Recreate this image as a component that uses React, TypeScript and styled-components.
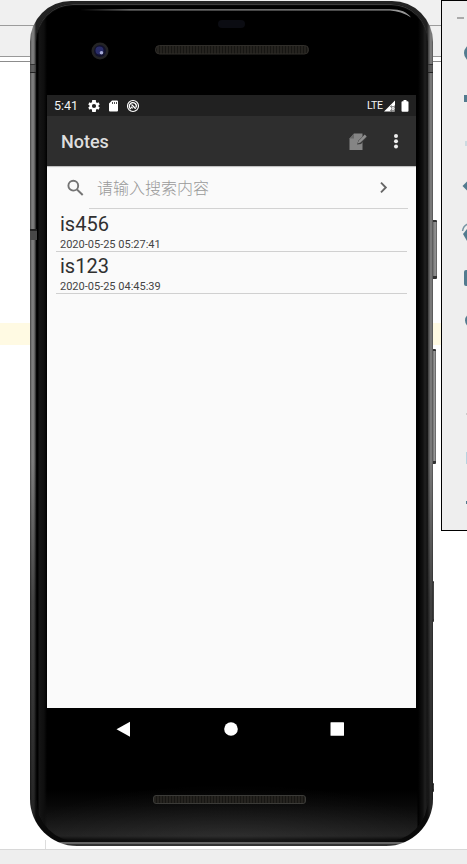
import React from "react";
import styled, { createGlobalStyle } from "styled-components";

const GlobalStyle = createGlobalStyle`
  * { box-sizing: border-box; }
  body { margin: 0; background: #fff; }
`;

const Desktop = styled.main`
  position: relative;
  width: 467px;
  height: 864px;
  overflow: hidden;
  background: #fff;
  font-family: Roboto, "Noto Sans CJK SC", sans-serif;
`;

const Editor = styled.div`
  height: 864px;
  display: flex;
  flex-direction: column;
`;

const MenuStrip = styled.div`
  height: 26px;
  background: #f0f0f0;
  border-bottom: 1px solid #9c9c9c;
`;

const TabStrip = styled.div`
  height: 31px;
  background: #f0f0f0;
  border-bottom: 1px solid #999;
`;

const SubStrip = styled.div`
  height: 5px;
  border-bottom: 1px solid #8c8c8c;
`;

const CodeArea = styled.div`
  flex: 1;
  padding-top: 261px;
`;

const CurrentLine = styled.div`
  height: 22px;
  background: #fffae3;
`;

const Gutter = styled.div`
  height: 9px;
  margin-left: 45px;
  border-left: 1px solid #ddd;
`;

const BottomStrip = styled.div`
  height: 15px;
  background: #eee;
  border-top: 1px solid #d8d8d8;
`;

const Phone = styled.section`
  position: absolute;
  left: 30px;
  top: 1px;
  width: 403px;
  height: 845px;
  border-radius: 41px 41px 47px 47px;
  padding: 3px 5px 4px 6px;
  background:
    linear-gradient(to bottom, transparent 0 63px, #333 63px 64px, #4448 64px 71px, #222 71px 72px, transparent 72px),
    linear-gradient(to bottom, transparent 841px, #666 841px 843px, #333 843px),
    linear-gradient(to bottom, #0000 0, #0000 460px, #0007 600px, #000a 780px, #000b 838px),
    linear-gradient(to right, #444 0, #808080 2px, #777 4px, #222 6px, #222 397px, #555 399px, #858585 401px, #505050 403px);
`;

const Face = styled.div`
  height: 838px;
  border-radius: 37px 37px 43px 43px;
  overflow: hidden;
  padding: 0 12px 0 11px;
  background:
    radial-gradient(ellipse 220px 58px at 50% 100%, #fff1, #fff0) no-repeat,
    linear-gradient(to right, #000 0 2px, #151515 3px, #0e0e0e 8px, transparent 11px, transparent 381px, #000 382px, #111 387px, #202020 389px, #101010 392px),
    linear-gradient(to bottom, #000 0, #000 785px, #070707 800px, #202020 832px, #080808 836px, #050505 838px);
  box-shadow: inset 0 1px 1px #444;
`;

const Forehead = styled.div`
  height: 91px;
`;

const ForeheadArt = styled.svg`
  display: block;
  width: 369px;
  height: 91px;
  overflow: visible;
`;

const Screen = styled.div`
  width: 369px;
  height: 613px;
  display: flex;
  flex-direction: column;
  background: #fafafa;
`;

const StatusBar = styled.header`
  height: 21px;
  padding: 0 7px;
  display: flex;
  align-items: center;
  background: #212121;
  color: #f4f4f4;
`;

const Clock = styled.span`
  width: 34px;
  font-size: 12.5px;
  line-height: 21px;
`;

const StatusIcon = styled.svg<{ $w: number; $gap?: number }>`
  width: ${(p) => p.$w}px;
  height: 14px;
  margin-right: ${(p) => p.$gap ?? 0}px;
  flex: none;
`;

const Network = styled.span`
  margin-left: auto;
  width: 17px;
  font-size: 10.5px;
  letter-spacing: -0.3px;
  line-height: 21px;
`;

const AppBar = styled.div`
  height: 50px;
  padding: 2px 14px 0;
  display: flex;
  align-items: center;
  background: #2e2e2e;
  color: #dedede;
`;

const Title = styled.h1`
  margin: 0 auto 0 0;
  font-size: 18px;
  font-weight: 500;
  line-height: 24px;
`;

const BarIcon = styled.svg<{ $w: number; $gap?: number }>`
  width: ${(p) => p.$w}px;
  height: 20px;
  margin-right: ${(p) => p.$gap ?? 0}px;
`;

const SearchRow = styled.div`
  height: 43px;
  padding: 0 8px 0 19px;
  display: flex;
  box-shadow: inset 0 2px 1px -1px #bbb;
`;

const SearchIcon = styled.svg`
  width: 18px;
  height: 43px;
  margin-right: 5px;
`;

const SearchField = styled.div`
  flex: 1;
  display: flex;
  padding: 0 13px 0 8px;
  border-bottom: 1px solid #d2d2d2;
  color: #999;
  font-family: "Noto Sans CJK SC", sans-serif;
  font-size: 16px;
  font-weight: 300;
  line-height: 42px;
`;

const Arrow = styled.svg`
  width: 20px;
  height: 43px;
  margin-left: auto;
`;

const NoteList = styled.div`
  padding: 0 9px;
`;

const Note = styled.article<{ $h: number }>`
  height: ${(p) => p.$h}px;
  padding: ${(p) => p.$h - 39}px 4px 0;
  border-bottom: 1px solid #d0d0d0;
  color: #303030;
`;

const NoteTitle = styled.div`
  font-size: 20px;
  line-height: 23px;
`;

const NoteDate = styled.div`
  font-size: 11px;
  line-height: 15px;
  padding-top: 1px;
  color: #444;
`;

const Navigation = styled.svg`
  display: block;
  width: 369px;
  height: 134px;
`;

const SideKey = styled.div<{ $y: number; $h: number; $w: number; $dark?: boolean }>`
  position: absolute;
  left: 432px;
  top: ${(p) => p.$y}px;
  width: ${(p) => p.$w}px;
  height: ${(p) => p.$h}px;
  border-radius: 0 1px 1px 0;
  border-top: 2px solid #333;
  border-bottom: 3px solid #333;
  background: ${(p) => (p.$dark ? "#444" : "linear-gradient(to right, #555, #999 65%, #555)")};
`;

const AntennaBand = styled.div`
  position: absolute;
  left: 30px;
  top: 229px;
  width: 7px;
  height: 11px;
  background: #484848;
  border-top: 2px solid #222;
`;

const EmulatorTools = styled.aside`
  position: absolute;
  left: 441px;
  top: 0;
  width: 30px;
  height: 531px;
  display: flex;
  flex-direction: column;
  background: #eee;
  border: 1px solid #000;
`;

const MinimizeRow = styled.div`
  height: 30px;
  padding: 16px 0 0 15px;
`;

const MinimizeMark = styled.div`
  width: 7px;
  height: 2px;
  background: #aaa;
`;

const ToolIcon = styled.svg`
  width: 46px;
  height: 45px;
  flex: none;
  fill: #527b8f;
`;

const tools: React.ReactNode[] = [
  <circle key="power" cx="31" cy="22" r="9" />,
  <path key="volume-up" d="M22 19h8v7h-8z" />,
  <path key="volume-down" d="M23 20h8v5h-8z" fill="#cddbe1" />,
  <path key="rotate-left" d="m20.500 20 6-6v12z" />,
  <g key="rotate-right">
    <path d="M20.500 20C21 17 23 14 26 13" fill="none" stroke="#7895a3" strokeWidth="1.500" />
    <path d="m21 23 4-5v12z" />
  </g>,
  <rect key="camera" x="22" y="14" width="20" height="16" rx="2" />,
  <circle key="zoom" cx="30" cy="19.500" r="7" />,
  null,
  <path key="back" d="M24 22h3v2h-3z" fill="#ccc" />,
];

export default function App() {
  return (
    <Desktop>
      <GlobalStyle />
      <Editor>
        <MenuStrip />
        <TabStrip />
        <SubStrip />
        <CodeArea><CurrentLine /></CodeArea>
        <Gutter />
        <BottomStrip />
      </Editor>

      <SideKey $y={220} $h={59} $w={5} />
      <SideKey $y={349} $h={115} $w={4} />
      <SideKey $y={581} $h={41} $w={2} $dark />
      <SideKey $y={783} $h={9} $w={2} $dark />

      <Phone>
        <Face>
          <Forehead>
            <ForeheadArt viewBox="47 4 369 91">
              <defs>
                <pattern id="mesh" width="3" height="3" patternUnits="userSpaceOnUse">
                  <rect width="3" height="3" fill="#25231f" />
                  <rect width="1" height="3" fill="#171613" />
                </pattern>
                <linearGradient id="shine">
                  <stop offset="0" stopColor="#777" stopOpacity="0" />
                  <stop offset=".15" stopColor="#858585" />
                  <stop offset="1" stopColor="#999" />
                </linearGradient>
              </defs>
              <path d="M80 9.300H390C401 9.500 407 12 411 17.500Q401 11 390 10.500H80z" fill="url(#shine)" />
              <rect x="218" y="20" width="27" height="8" rx="4" fill="#0b0c12" />
              <rect x="155.500" y="45.500" width="153" height="8.500" rx="4" fill="url(#mesh)" stroke="#302e2a" />
              <circle cx="100" cy="51" r="8.500" fill="#242425" />
              <circle cx="100" cy="51" r="6" fill="#12122c" />
              <circle cx="99.500" cy="50.500" r="4" fill="#292c68" />
              <circle cx="101.500" cy="52.800" r="1.800" fill="#a8acd8" />
            </ForeheadArt>
          </Forehead>

          <Screen>
            <StatusBar>
              <Clock>5:41</Clock>
              <StatusIcon $w={12} $gap={9} viewBox="2 2 20 20" fill="#fff">
                <path d="M19.430 12.980a8 8 0 0 0 0-1.960l2.110-1.650-2-3.460-2.490 1a7.300 7.300 0 0 0-1.690-.98L15 2H9l-.38 3.930c-.61.250-1.170.590-1.690.980l-2.490-1-2 3.460 2.110 1.650a8 8 0 0 0 0 1.960l-2.110 1.650 2 3.460 2.490-1c.52.400 1.080.730 1.690.980L9 22h6l.38-3.930c.61-.25 1.170-.59 1.690-.98l2.490 1 2-3.460zM12 15.500a3.500 3.500 0 1 1 0-7 3.500 3.500 0 0 1 0 7z" />
              </StatusIcon>
              <StatusIcon $w={9} $gap={8} viewBox="0 0 9 14" fill="#fff">
                <path fillRule="evenodd" d="M3 1.500h5q1 0 1 1v9q0 1-1 1H1q-1 0-1-1v-7zM3 3v2h.8V3zm2 0v2h.8V3zm2 0v2h.8V3z" />
              </StatusIcon>
              <StatusIcon $w={14} viewBox="0 0 14 14" fill="none" stroke="#fff">
                <circle cx="7" cy="7" r="5.500" strokeWidth="1.200" />
                <path d="M5 10A3.300 3.300 0 0 1 4.300 4.800C5.500 3.500 7.800 3.400 9.200 4.600 10.300 5.600 10.600 7.200 9.900 8.500M5.500 5.500l4.200 4.200M5 7.700l1.700 1.700" strokeWidth="1.300" />
              </StatusIcon>
              <Network>LTE</Network>
              <StatusIcon $w={12} $gap={5} viewBox="0 0 12 14">
                <path d="M11 1.500v11H0z" fill="#fff" />
                <path d="m7 7 4 5m0-5-4 5" stroke="#212121" strokeWidth="2" />
                <path d="m7.500 7.500 3 4m0-4-3 4" stroke="#fff" strokeWidth="1.100" />
              </StatusIcon>
              <StatusIcon $w={8} viewBox="0 0 8 14" fill="#fff">
                <path d="M2.500 1h3v1.200h1q1 0 1 1v8.500q0 1-1 1h-5q-1 0-1-1V3.200q0-1 1-1h1z" />
              </StatusIcon>
            </StatusBar>

            <AppBar>
              <Title>Notes</Title>
              <BarIcon $w={20} $gap={25} viewBox="0 0 20 20">
                <path d="M1.500 6.500 6 1.500h8.500V18h-13z" fill="#858585" />
                <path d="m1.500 6.500 4.500-5v5z" fill="#686868" />
                <path d="m9 12.500 1.500-4L16 3l3 2.500-6 6.500z" fill="#3a3a3a" />
                <path d="m9.500 11.500 1.300-2.800 6-6.200 1.900 1.900-6.200 6z" fill="#8d8d8d" />
              </BarIcon>
              <BarIcon $w={6} $gap={3} viewBox="0 0 6 20" fill="#eee">
                <circle cx="3" cy="4" r="2" /><circle cx="3" cy="9.200" r="2" /><circle cx="3" cy="14.400" r="2" />
              </BarIcon>
            </AppBar>

            <SearchRow>
              <SearchIcon viewBox="0 0 18 43" fill="none" stroke="#747474" strokeWidth="1.900">
                <circle cx="7.300" cy="19.700" r="4.900" /><path d="m11 23.500 5.700 5.500" />
              </SearchIcon>
              <SearchField>
                <span>请输入搜索内容</span>
                <Arrow viewBox="0 0 20 43" fill="none" stroke="#666" strokeWidth="1.900">
                  <path d="m6 16.700 4.800 4.800L6 26.300" />
                </Arrow>
              </SearchField>
            </SearchRow>

            <NoteList>
              <Note $h={43}>
                <NoteTitle>is456</NoteTitle>
                <NoteDate>2020-05-25 05:27:41</NoteDate>
              </Note>
              <Note $h={42}>
                <NoteTitle>is123</NoteTitle>
                <NoteDate>2020-05-25 04:45:39</NoteDate>
              </Note>
            </NoteList>
          </Screen>

          <Navigation viewBox="47 708 369 134" fill="#fff">
            <path d="M116.500 729.200 130 721.700v15z" />
            <circle cx="231" cy="729" r="6.800" />
            <rect x="330.500" y="722.300" width="13.500" height="13.500" rx=".5" />
            <rect x="153.500" y="795.500" width="152" height="8" rx="2.500" fill="url(#mesh)" stroke="#3b3b38" />
          </Navigation>
        </Face>
      </Phone>

      <AntennaBand />

      <EmulatorTools>
        <MinimizeRow><MinimizeMark /></MinimizeRow>
        {tools.map((shape, index) => (
          <ToolIcon key={index} viewBox="0 0 46 45">{shape}</ToolIcon>
        ))}
        <ToolIcon viewBox="0 0 46 45"><path d="M24 16h4v12h-4z" fill="#b8d3df" /></ToolIcon>
        <ToolIcon viewBox="0 0 46 45"><path d="M24 20h4v3h-4z" /></ToolIcon>
      </EmulatorTools>
    </Desktop>
  );
}
